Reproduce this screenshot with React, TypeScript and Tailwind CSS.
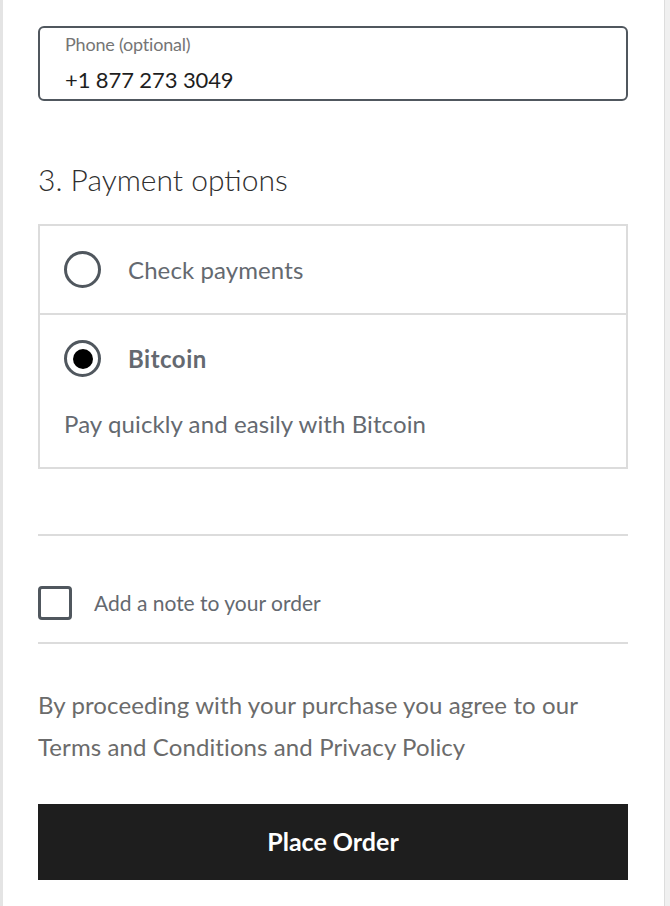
import React from 'react'

const font = { fontFamily: 'Lato, "Open Sans", sans-serif' }

const Radio = ({ checked }: { checked?: boolean }) => (
    <span className="flex items-center justify-center w-[37px] h-[37px] rounded-full border-[3px] border-[#50575e] bg-white shrink-0">
        {checked && <span className="w-[20px] h-[20px] rounded-full bg-black" />}
    </span>
)

const App = () => {
    return (
        <div className="flex w-[670px] h-[906px] bg-white overflow-hidden" style={font}>
            <div className="w-[3px] bg-[#e4e4e4]" />
            <div className="flex-1 pl-[35px] pr-[36px]">
                <div className="mt-[26px] h-[75px] border-2 border-[#50575e] rounded-[6px] px-[25px] pt-[3px]">
                    <div className="text-[18px] leading-[26px] text-[#757575] tracking-[-0.2px]">Phone (optional)</div>
                    <div className="mt-[8px] text-[22px] leading-[30px] text-[#1e1e1e] tracking-[-0.1px]">+1 877 273 3049</div>
                </div>

                <h2 className="mt-[60px] text-[30px] leading-[36px] font-light text-[#2f2f2f]">3. Payment options</h2>

                <div className="mt-[27px] border-2 border-[#dcdcdc]">
                    <div className="h-[89px] flex items-center pl-[24px] gap-[27px] border-b-2 border-[#dcdcdc]">
                        <Radio />
                        <span className="text-[24px] text-[#646970] tracking-[0.1px]">Check payments</span>
                    </div>
                    <div className="h-[152px] pl-[24px] pt-[25px]">
                        <div className="flex items-center gap-[27px]">
                            <Radio checked />
                            <span className="text-[24px] font-bold text-[#646970] tracking-[0.5px]">Bitcoin</span>
                        </div>
                        <p className="mt-[32px] text-[24px] leading-[30px] text-[#646970] tracking-[0.1px]">Pay quickly and easily with Bitcoin</p>
                    </div>
                </div>

                <div className="mt-[65px] h-[2px] bg-[#dcdcdc]" />

                <label className="flex items-center gap-[22px] mt-[50px] h-[34px]">
                    <span className="w-[34px] h-[34px] rounded-[4px] border-[3px] border-[#50575e] shrink-0" />
                    <span className="text-[21px] text-[#646970]">Add a note to your order</span>
                </label>

                <div className="mt-[22px] h-[2px] bg-[#dcdcdc]" />

                <p className="mt-[40px] text-[24px] leading-[42px] text-[#6b6b6b] tracking-[0.1px]">
                    By proceeding with your purchase you agree to our Terms and Conditions and Privacy Policy
                </p>

                <button className="mt-[36px] w-full h-[76px] bg-[#1e1e1e] text-white text-[25px] font-bold">
                    Place Order
                </button>
            </div>
            <div className="w-[1px] bg-[#dddddd]" />
            <div className="w-[5px] bg-[#f0f0f0]" />
        </div>
    )
}

export default App
